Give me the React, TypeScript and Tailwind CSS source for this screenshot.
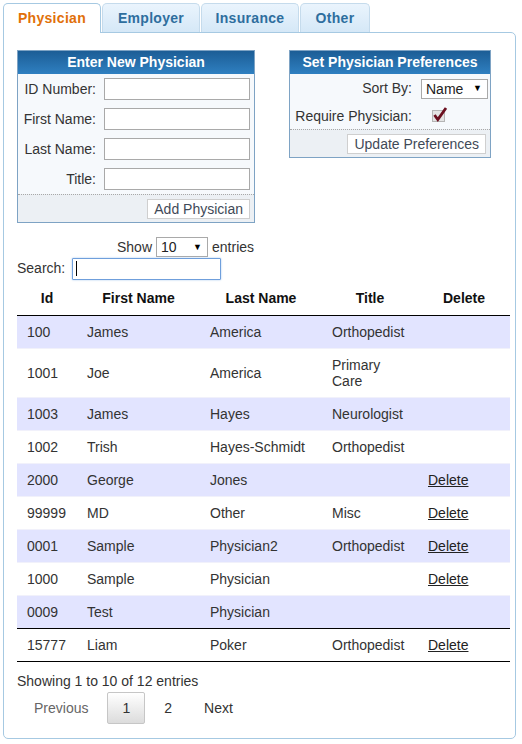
import React from "react";

const ROWS = [
  { id: "100", first: "James", last: "America", title: "Orthopedist", del: false },
  { id: "1001", first: "Joe", last: "America", title: "Primary Care", del: false },
  { id: "1003", first: "James", last: "Hayes", title: "Neurologist", del: false },
  { id: "1002", first: "Trish", last: "Hayes-Schmidt", title: "Orthopedist", del: false },
  { id: "2000", first: "George", last: "Jones", title: "", del: true },
  { id: "99999", first: "MD", last: "Other", title: "Misc", del: true },
  { id: "0001", first: "Sample", last: "Physician2", title: "Orthopedist", del: true },
  { id: "1000", first: "Sample", last: "Physician", title: "", del: true },
  { id: "0009", first: "Test", last: "Physician", title: "", del: false },
  { id: "15777", first: "Liam", last: "Poker", title: "Orthopedist", del: true },
];

const TABS = [
  { label: "Physician", w: "w-[98px]" },
  { label: "Employer", w: "w-[98px]" },
  { label: "Insurance", w: "w-[98px]" },
  { label: "Other", w: "w-[70px]" },
];

function FakeSelect({ value, width }: { value: string; width: string }) {
  return (
    <div
      className={`${width} h-[20px] border border-[#a9a9a9] bg-white flex items-center justify-between pl-[4px] pr-[5px] text-[14px] text-[#222]`}
    >
      <span className="leading-[18px]">{value}</span>
      <span className="text-[9px] leading-none text-black">▼</span>
    </div>
  );
}

function CheckedBox() {
  return (
    <svg width="17" height="17" viewBox="0 0 17 17">
      <rect x="1.5" y="4.5" width="12" height="11" fill="#e4e4e4" stroke="#b5b5b5" />
      <path d="M3.5 9 L6.8 13.5 L15 2" fill="none" stroke="#6b0f1f" strokeWidth="2.8" strokeLinejoin="miter" />
    </svg>
  );
}

function FormRow({ label }: { label: string }) {
  return (
    <div className="grid grid-cols-[78px_146px] gap-x-[8px] h-[30px] items-center">
      <span className="text-right">{label}</span>
      <div className="h-[22px] border border-[#a9a9a9] bg-white" />
    </div>
  );
}

export default function App() {
  return (
    <div className="w-[522px] h-[744px] bg-white font-['Liberation_Sans',Arial,sans-serif] text-[14px] text-[#333]">
      {/* Tabs */}
      <div className="flex items-start gap-[1px] pl-[3px] pt-[3px] h-[32px]">
        {TABS.map((t, i) =>
          i === 0 ? (
            <div
              key={t.label}
              className={`${t.w} relative z-10 h-[30px] text-center border border-b-0 border-[#a6c9e2] rounded-t-[5px] bg-white font-bold tracking-[0.3px] text-[#e17009] leading-[28px]`}
            >
              {t.label}
            </div>
          ) : (
            <div
              key={t.label}
              className={`${t.w} h-[29px] text-center border border-b-0 border-[#c5dbec] rounded-t-[5px] bg-gradient-to-b from-[#eaf4fd] to-[#d5e8f7] font-bold tracking-[0.3px] text-[#2e6e9e] leading-[28px]`}
            >
              {t.label}
            </div>
          )
        )}
      </div>

      {/* Panel */}
      <div className="ml-[3px] w-[513px] border border-[#a6c9e2] rounded-b-[5px] rounded-tr-[5px] bg-white pl-[13px] pr-[4px] pt-[17px] pb-[14px]">
        <div className="flex items-start gap-[34px]">
          {/* Enter New Physician */}
          <div className="w-[238px] border border-[#7ea3c4] bg-[#f6f9fc]">
            <div className="h-[23px] bg-gradient-to-b from-[#1c5d96] to-[#2f80c1] text-white font-bold text-center leading-[23px]">
              Enter New Physician
            </div>
            <FormRow label="ID Number:" />
            <FormRow label="First Name:" />
            <FormRow label="Last Name:" />
            <FormRow label="Title:" />
            <div className="h-[28px] border-t border-dotted border-[#a8a8a8] bg-[#ecf0f4] flex items-center justify-end pr-[4px]">
              <button className="h-[20px] px-[6px] border border-[#cfcfcf] bg-white text-[#3f4a58] leading-[18px]">
                Add Physician
              </button>
            </div>
          </div>

          {/* Preferences */}
          <div className="w-[202px] border border-[#7ea3c4] bg-[#f6f9fc]">
            <div className="h-[23px] bg-gradient-to-b from-[#1c5d96] to-[#2f80c1] text-white font-bold text-center leading-[23px]">
              Set Physician Preferences
            </div>
            <div className="grid grid-cols-[122px_67px] gap-x-[9px] h-[29px] items-center">
              <span className="text-right">Sort By:</span>
              <FakeSelect value="Name" width="w-[67px]" />
            </div>
            <div className="grid grid-cols-[122px_67px] gap-x-[9px] h-[26px] items-center">
              <span className="text-right">Require Physician:</span>
              <div className="pl-[10px] pb-[3px]">
                <CheckedBox />
              </div>
            </div>
            <div className="h-[28px] border-t border-dotted border-[#a8a8a8] bg-[#ecf0f4] flex items-center justify-end pr-[4px]">
              <button className="h-[20px] px-[6px] border border-[#cfcfcf] bg-white text-[#3f4a58] leading-[18px]">
                Update Preferences
              </button>
            </div>
          </div>
        </div>

        {/* Length + search */}
        <div className="mt-[14px] pl-[100px] flex items-center gap-[4px] h-[20px]">
          <span>Show</span>
          <FakeSelect value="10" width="w-[52px]" />
          <span>entries</span>
        </div>
        <div className="flex items-center gap-[7px] h-[23px]">
          <span>Search:</span>
          <div className="w-[149px] h-[22px] border border-[#6f9fdc] bg-white rounded-[1px] shadow-[0_0_2px_#9ec0ec] flex items-center pl-[3px]">
            <span className="w-px h-[15px] bg-black" />
          </div>
        </div>

        {/* Table */}
        <table className="w-[493px] table-fixed border-collapse">
          <colgroup>
            <col className="w-[60px]" />
            <col className="w-[123px]" />
            <col className="w-[122px]" />
            <col className="w-[96px]" />
            <col className="w-[92px]" />
          </colgroup>
          <thead>
            <tr className="border-b border-black">
              {["Id", "First Name", "Last Name", "Title", "Delete"].map((h) => (
                <th key={h} className="pt-[10px] pb-[9px] leading-[16px] font-bold text-[#111] text-center">
                  {h}
                </th>
              ))}
            </tr>
          </thead>
          <tbody>
            {ROWS.map((r, i) => (
              <tr
                key={r.id}
                className={`${i % 2 === 0 ? "bg-[#e2e4ff]" : "bg-white"} ${i > 0 ? "border-t border-[#f1f1fb]" : ""} ${
                  i === ROWS.length - 1 ? "border-b border-black" : ""
                }`}
              >
                <td className="px-[10px] py-[8px] leading-[16px] align-middle">{r.id}</td>
                <td className="px-[10px] py-[8px] leading-[16px] align-middle">{r.first}</td>
                <td className="px-[10px] py-[8px] leading-[16px] align-middle">{r.last}</td>
                <td className="px-[10px] py-[8px] leading-[16px] align-middle">{r.title}</td>
                <td className="px-[10px] py-[8px] leading-[16px] align-middle">
                  {r.del && <span className="underline text-[#222]">Delete</span>}
                </td>
              </tr>
            ))}
          </tbody>
        </table>

        {/* Info + paging */}
        <div className="pt-[10px] leading-[18px]">Showing 1 to 10 of 12 entries</div>
        <div className="mt-[2px] flex items-center">
          <span className="ml-[2px] px-[14px] py-[6px] leading-[17px] border border-transparent text-[#666]">Previous</span>
          <span className="ml-[4px] px-[14px] py-[6px] leading-[18px] border border-[#c6c6c6] bg-gradient-to-b from-white to-[#dcdcdc] text-[#333] rounded-[2px]">
            1
          </span>
          <span className="ml-[4px] px-[14px] py-[6px] leading-[17px] border border-transparent text-[#333]">2</span>
          <span className="ml-[2px] px-[14px] py-[6px] leading-[17px] border border-transparent text-[#333]">Next</span>
        </div>
      </div>
    </div>
  );
}
